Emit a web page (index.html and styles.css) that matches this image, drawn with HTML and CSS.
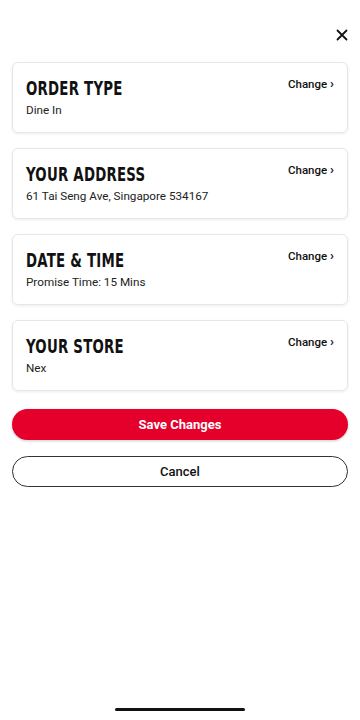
FILE: index.html
```html
<!DOCTYPE html>
<html>
<head>
<meta charset="utf-8">
<link rel="stylesheet" href="styles.css">
</head>
<body>
<div class="screen">
  <div class="topbar">
    <svg class="close" width="12" height="12" viewBox="0 0 12 12"><path d="M1.5 1.5 L10.5 10.5 M10.5 1.5 L1.5 10.5" stroke="#111" stroke-width="1.8" stroke-linecap="round"/></svg>
  </div>
  <div class="cards">
    <div class="card">
      <div class="info"><div class="title">ORDER TYPE</div><div class="sub">Dine In</div></div>
      <div class="change">Change <span class="chev">›</span></div>
    </div>
    <div class="card">
      <div class="info"><div class="title">YOUR ADDRESS</div><div class="sub">61 Tai Seng Ave, Singapore 534167</div></div>
      <div class="change">Change <span class="chev">›</span></div>
    </div>
    <div class="card">
      <div class="info"><div class="title">DATE &amp; TIME</div><div class="sub">Promise Time: 15 Mins</div></div>
      <div class="change">Change <span class="chev">›</span></div>
    </div>
    <div class="card">
      <div class="info"><div class="title">YOUR STORE</div><div class="sub">Nex</div></div>
      <div class="change">Change <span class="chev">›</span></div>
    </div>
  </div>
  <div class="buttons">
    <button class="btn save">Save Changes</button>
    <button class="btn cancel">Cancel</button>
  </div>
  <div class="spacer"></div>
  <div class="home"></div>
</div>
</body>
</html>
```
FILE: styles.css
```css
html, body { margin: 0; padding: 0; background: #fff; }
body { font-family: Roboto, "Liberation Sans", Arial, sans-serif; color: #111; }
.screen { width: 360px; height: 720px; display: flex; flex-direction: column; box-sizing: border-box; }
.topbar { height: 62px; display: flex; justify-content: flex-end; align-items: flex-start; padding: 29px 12px 0 0; box-sizing: border-box; }
.close { display: block; }
.cards { display: flex; flex-direction: column; gap: 15px; padding: 0 12px; }
.card { height: 71px; box-sizing: border-box; border: 1px solid #e6e6e6; border-radius: 6px; box-shadow: 0 1px 3px rgba(0,0,0,0.08); display: flex; justify-content: space-between; padding: 14px 13px 0 13px; }
.title { font-family: "DejaVu Sans Condensed", "DejaVu Sans", sans-serif; font-stretch: condensed; font-weight: bold; font-size: 19.5px; letter-spacing: 0.3px; line-height: 24px; color: #111; transform: scaleX(0.76); transform-origin: left; white-space: nowrap; }
.sub { font-size: 11.7px; line-height: 14px; margin-top: 2px; color: #222; }
.change { font-size: 11.5px; font-weight: 500; line-height: 14px; margin-top: 0; color: #111; }
.chev { font-weight: bold; font-size: 13px; }
.buttons { display: flex; flex-direction: column; gap: 16px; padding: 18px 12px 0 12px; }
.btn { height: 31px; border-radius: 16px; font-family: Roboto, "Liberation Sans", Arial, sans-serif; font-size: 13px; font-weight: bold; width: 100%; padding: 0; }
.save { background: #e4002b; color: #fff; border: none; box-shadow: 0 1px 3px rgba(0,0,0,0.2); }
.cancel { background: #fff; color: #111; border: 1px solid #333; font-weight: 500; }
.spacer { flex: 1; }
.home { width: 130px; height: 3px; border-radius: 2px; background: #111; margin: 0 auto 9px auto; }
```
